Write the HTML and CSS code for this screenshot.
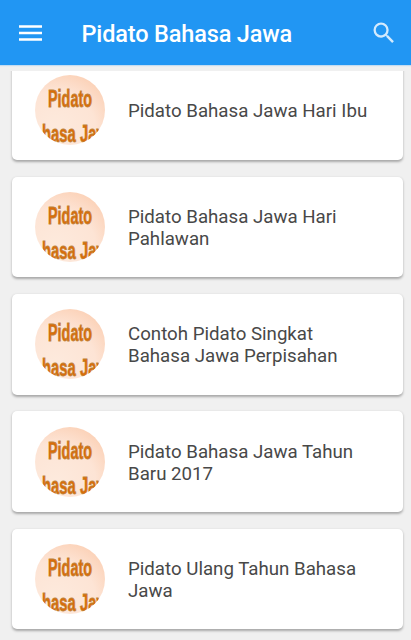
FILE: index.html
```
<!DOCTYPE html>
<html lang="id">
<head>
    <meta charset="UTF-8">
    <meta name="viewport" content="width=device-width, initial-scale=1.0">
    <title>Pidato Bahasa Jawa</title>
    <link rel="stylesheet" href="styles.css">
</head>
<body>
    <!-- shared thumbnail -->
    <svg class="defs" width="0" height="0">
        <defs>
            <radialGradient id="peach" cx="0.3" cy="0.8" r="0.95">
                <stop offset="0" stop-color="#fdeadd"/>
                <stop offset="0.6" stop-color="#fde4d5"/>
                <stop offset="1" stop-color="#fbcdb0"/>
            </radialGradient>
            <clipPath id="round"><circle cx="35" cy="35" r="35"/></clipPath>
        </defs>
        <symbol id="thumb" viewBox="0 0 70 70">
            <circle cx="35" cy="35" r="35" fill="url(#peach)"/>
            <g class="thumb-text" clip-path="url(#round)">
                <text x="13" y="31.7" textLength="44" lengthAdjust="spacingAndGlyphs">Pidato</text>
                <text x="7" y="66.8" textLength="66" lengthAdjust="spacingAndGlyphs">hasa Jaw</text>
            </g>
        </symbol>
    </svg>

    <header class="toolbar">
        <svg class="menu-icon" viewBox="0 0 24 18" width="24" height="18">
            <path d="M1 2.5h23M1 9h23M1 15.500h23"/>
        </svg>
        <h1>Pidato Bahasa Jawa</h1>
        <svg class="search-icon" viewBox="0 0 24 24" width="28" height="28">
            <path d="M15.5 14h-.79l-.28-.27A6.47 6.47 0 0 0 16 9.5 6.5 6.5 0 1 0 9.5 16c1.61 0 3.09-.59 4.23-1.57l.27.28v.79l5 4.99L20.49 19l-4.99-5zm-6 0C7.01 14 5 11.99 5 9.5S7.01 5 9.5 5 14 7.01 14 9.5 11.99 14 9.5 14z"/>
        </svg>
    </header>

    <main class="list">
        <div class="card">
            <svg class="thumb"><use href="#thumb"/></svg>
            <p>Pidato Bahasa Jawa Hari Ibu</p>
        </div>
        <div class="card">
            <svg class="thumb"><use href="#thumb"/></svg>
            <p>Pidato Bahasa Jawa Hari<br>Pahlawan</p>
        </div>
        <div class="card">
            <svg class="thumb"><use href="#thumb"/></svg>
            <p>Contoh Pidato Singkat<br>Bahasa Jawa Perpisahan</p>
        </div>
        <div class="card">
            <svg class="thumb"><use href="#thumb"/></svg>
            <p>Pidato Bahasa Jawa Tahun<br>Baru 2017</p>
        </div>
        <div class="card">
            <svg class="thumb"><use href="#thumb"/></svg>
            <p>Pidato Ulang Tahun Bahasa<br>Jawa</p>
        </div>
    </main>
</body>
</html>
```

FILE: styles.css
```
* {
    box-sizing: border-box;
}

body {
    margin: 0;
    height: 640px;
    display: flex;
    flex-direction: column;
    background-color: #f0f0f0;
    font-family: Roboto, sans-serif;
    overflow: hidden;
}

.defs {
    display: block;
    flex: none;
}

.toolbar {
    flex: none;
    height: 65px;
    display: flex;
    align-items: center;
    padding: 2px 13px 0 18px;
    background-color: #2196f3;
    box-shadow: 0 1px 1px #c3dcf1;
}

.menu-icon {
    stroke: #fff;
    stroke-width: 2.3;
    fill: none;
    margin-top: -1px;
}

.toolbar h1 {
    flex: 1;
    margin: 0 0 0 39.5px;
    color: #fff;
    font-size: 23.5px;
    font-weight: 500;
    line-height: 28px;
    letter-spacing: -0.15px;
    white-space: nowrap;
}

.search-icon {
    fill: #d3eafd;
    margin-top: -2px;
}

.list {
    flex: 1;
    min-height: 0;
    margin-top: 6px;
    padding: 0 8px 0 12px;
    display: flex;
    flex-direction: column;
    gap: 16.7px;
    overflow: hidden;
}

.card {
    flex: none;
    height: 100.6px;
    display: flex;
    align-items: center;
    padding-left: 23px;
    background-color: #fff;
    border-radius: 5px;
    box-shadow: 0 1.5px 2.5px rgba(0, 0, 0, 0.3);
}

/* list is scrolled a little past its start */
.card:first-child {
    margin-top: -11.6px;
}

.thumb {
    width: 70px;
    height: 70px;
    flex: none;
}

.thumb-text {
    font-family: "Liberation Sans", Arial, sans-serif;
    font-size: 24px;
    font-weight: bold;
    fill: #dc6c08;
    stroke: #bd8238;
    stroke-width: 0.8;
}

.card p {
    margin: 0 0 0 23px;
    padding-top: 2px;
    color: #484848;
    font-size: 18.7px;
    line-height: 22px;
    white-space: nowrap;
}
```
